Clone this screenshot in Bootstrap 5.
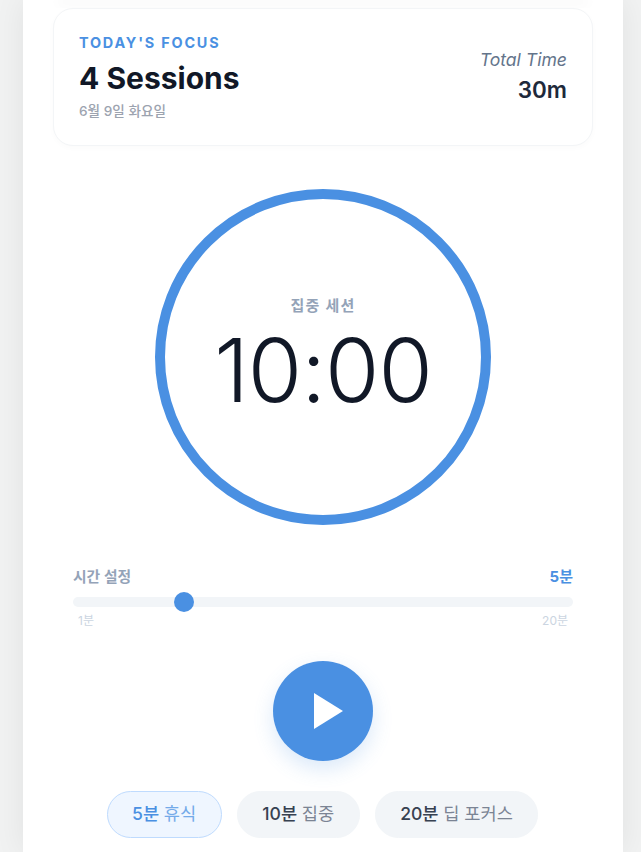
<!DOCTYPE html>
<html lang="ko">
<head>
    <meta charset="UTF-8">
    <meta name="viewport" content="width=device-width, initial-scale=1.0">
    <title>Focus Timer</title>
    <link rel="stylesheet" href="https://cdn.jsdelivr.net/npm/bootstrap@5.3.0/dist/css/bootstrap.min.css">
    <style>
        html, body {
            height: 100%;
            overflow: hidden;
        }

        body {
            background-color: #f1f2f2;
            font-family: Inter, "Noto Sans CJK KR", sans-serif;
        }

        .app-shell {
            width: 600px;
            height: 852px;
            margin-left: 23px;
            background-color: #fff;
            box-shadow: 0 0 30px rgba(0, 0, 0, 0.07);
            padding: 0 30px;
            overflow: hidden;
        }

        /* Remainder of the header's shadow above the card */
        .top-shade {
            height: 8px;
            overflow: hidden;
        }

        .top-shade-line {
            height: 0;
            margin: 0 6px;
            box-shadow: 0 2px 12px 2px rgba(30, 41, 59, 0.05);
        }

        .focus-card {
            height: 138px;
            padding: 0 25px;
            background-color: #fff;
            border: 1px solid #f3f5f7;
            border-radius: 20px;
            box-shadow: 0 2px 6px rgba(30, 41, 59, 0.02);
        }

        .focus-label {
            font-size: 14.4px;
            line-height: 17px;
            font-weight: 700;
            letter-spacing: 1.8px;
            color: #4a90e2;
            margin-bottom: 9px;
        }

        .focus-title {
            font-size: 30px;
            line-height: 36px;
            font-weight: 700;
            color: #111827;
            margin-bottom: 7px;
        }

        .focus-date {
            font-size: 13.6px;
            line-height: 17px;
            font-weight: 500;
            color: #9ca3af;
        }

        .total-box {
            padding-bottom: 3px;
        }

        .total-label {
            font-size: 17.6px;
            line-height: 21px;
            font-style: italic;
            color: #64748b;
            margin-bottom: 6px;
        }

        .total-value {
            font-size: 22.4px;
            line-height: 27px;
            font-weight: 600;
            color: #1e293b;
        }

        .timer-ring {
            width: 336px;
            height: 336px;
            margin: 43px auto 0;
            border: 10px solid #4a90e2;
            border-radius: 50%;
        }

        .timer-label {
            font-size: 15px;
            line-height: 18px;
            font-weight: 600;
            letter-spacing: 1.2px;
            color: #94a3b8;
            margin-top: 5px;
            margin-bottom: 2px;
        }

        .timer-digits {
            font-size: 88px;
            line-height: 106px;
            font-weight: 300;
            letter-spacing: -1px;
            color: #111827;
        }

        .slider-box {
            margin-top: 43px;
            padding: 0 20px;
        }

        .slider-title {
            font-size: 14.8px;
            line-height: 18px;
            font-weight: 600;
            color: #94a3b8;
        }

        .slider-value {
            font-size: 15px;
            line-height: 18px;
            font-weight: 700;
            color: #4a90e2;
        }

        .slider-track {
            height: 10px;
            margin-top: 11px;
            background-color: #f2f5f8;
            border-radius: 5px;
        }

        .slider-thumb {
            position: absolute;
            left: 101px;
            top: -5px;
            width: 20px;
            height: 20px;
            background-color: #4a90e2;
            border-radius: 50%;
        }

        .slider-ends {
            margin-top: 6px;
            padding: 0 5px;
            font-size: 12px;
            line-height: 15px;
            color: #cbd5e1;
        }

        .play-btn {
            width: 100px;
            height: 100px;
            margin: 33px auto 0;
            background-color: #4a90e2;
            border: 0;
            border-radius: 50%;
            box-shadow: 0 8px 20px rgba(74, 144, 226, 0.2);
        }

        .play-icon {
            margin-left: 10px;
        }

        .preset-row {
            margin-top: 30px;
            padding-right: 1px;
            gap: 15px;
        }

        .preset-btn {
            height: 47px;
            padding: 0 24.5px;
            font-size: 17.6px;
            font-weight: 500;
            color: #374151;
            background-color: #f2f5f8;
            border: 1px solid #f2f5f8;
            border-radius: 24px;
        }

        .preset-btn span {
            color: #7b8494;
            font-weight: 400;
        }

        .preset-btn.is-active {
            color: #4a90e2;
            background-color: #eff6ff;
            border-color: #bfdbfe;
        }

        .preset-btn.is-active span {
            color: #74aae9;
        }
    </style>
</head>
<body>

    <div class="app-shell">
        <div class="top-shade"><div class="top-shade-line"></div></div>

        <!-- Today's focus -->
        <div class="focus-card d-flex justify-content-between align-items-center">
            <div>
                <div class="focus-label">TODAY'S FOCUS</div>
                <div class="focus-title">4 Sessions</div>
                <div class="focus-date">6월 9일 화요일</div>
            </div>
            <div class="total-box text-end">
                <div class="total-label">Total Time</div>
                <div class="total-value">30m</div>
            </div>
        </div>

        <!-- Timer -->
        <div class="timer-ring d-flex flex-column align-items-center justify-content-center">
            <div class="timer-label">집중 세션</div>
            <div class="timer-digits">10:00</div>
        </div>

        <!-- Duration slider -->
        <div class="slider-box">
            <div class="d-flex justify-content-between align-items-center">
                <span class="slider-title">시간 설정</span>
                <span class="slider-value">5분</span>
            </div>
            <div class="slider-track position-relative">
                <div class="slider-thumb"></div>
            </div>
            <div class="slider-ends d-flex justify-content-between">
                <span>1분</span>
                <span>20분</span>
            </div>
        </div>

        <!-- Start -->
        <button type="button" class="play-btn d-flex align-items-center justify-content-center" aria-label="Start">
            <svg class="play-icon" width="30" height="36" viewBox="0 0 30 36"><polygon points="1,0 30,18 1,36" fill="#fff"/></svg>
        </button>

        <!-- Presets -->
        <div class="preset-row d-flex justify-content-center">
            <button type="button" class="preset-btn is-active">5분 <span>휴식</span></button>
            <button type="button" class="preset-btn">10분 <span>집중</span></button>
            <button type="button" class="preset-btn">20분 <span>딥 포커스</span></button>
        </div>
    </div>

    <script src="https://cdn.jsdelivr.net/npm/bootstrap@5.3.0/dist/js/bootstrap.bundle.min.js"></script>
</body>
</html>
